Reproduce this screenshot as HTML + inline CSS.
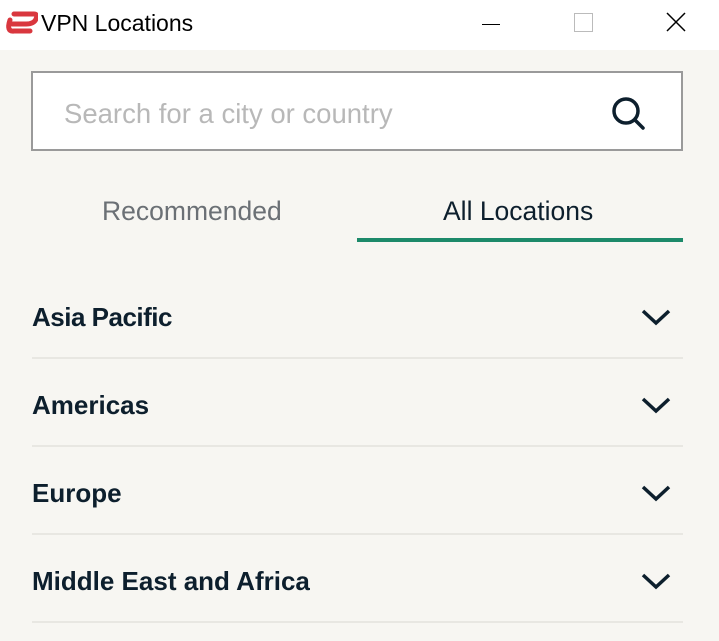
<!DOCTYPE html>
<html><head><style>
body{margin:0;width:719px;height:641px;background:#f7f6f2;font-family:"Liberation Sans",sans-serif;position:relative;overflow:hidden}
.tb{position:absolute;left:0;top:0;width:719px;height:50px;background:#fff}
.title{position:absolute;left:41px;top:10px;font-size:23px;color:#000}
.search{position:absolute;left:31px;top:71px;width:652px;height:80px;border:2px solid #9a9a9a;background:#fff;box-sizing:border-box}
.ph{position:absolute;left:31px;top:25px;font-size:27.5px;color:#b8b8b8}
.tab{position:absolute;top:196px;font-size:26.5px}
.ul{position:absolute;left:357px;top:238px;width:326px;height:4px;background:#1d8a6a}
.row{position:absolute;left:32px;width:651px;height:88px;border-bottom:2px solid #e8e7e2;box-sizing:border-box}
.row span{position:absolute;left:0;top:31px;font-size:26px;font-weight:bold;color:#0d1f2d}
.row svg{position:absolute;right:12px;top:37px}
</style></head><body>
<div class="tb">
<svg style="position:absolute;left:4px;top:11px" width="34" height="24" viewBox="0 0 34 24"><path d="M10 3 H30 Q34 3 32 8 Q30 13 22 13 H8" fill="none" stroke="#d9373e" stroke-width="5" stroke-linecap="round"/><path d="M6 9 Q2 21 10 20 H26" fill="none" stroke="#d9373e" stroke-width="5" stroke-linecap="round"/></svg>
<div class="title">VPN Locations</div>
<div style="position:absolute;left:482px;top:24px;width:18px;height:1px;background:#000"></div>
<div style="position:absolute;left:574px;top:13px;width:17px;height:17px;border:1px solid #bbb"></div>
<svg style="position:absolute;left:666px;top:12px" width="20" height="20"><path d="M1 1L19 19M19 1L1 19" stroke="#000" stroke-width="1.5"/></svg>
</div>
<div class="search"><div class="ph">Search for a city or country</div>
<svg style="position:absolute;left:576px;top:21px" width="40" height="40"><circle cx="17" cy="17" r="12" fill="none" stroke="#0d1f2d" stroke-width="3.5"/><path d="M26 26L34 34" stroke="#0d1f2d" stroke-width="3.5" stroke-linecap="round"/></svg></div>
<div class="tab" style="left:102px;color:#6b7075">Recommended</div>
<div class="tab" style="left:443px;color:#0d1f2d">All Locations</div>
<div class="ul"></div>
<div class="row" style="top:271px"><span style="letter-spacing:-0.5px">Asia Pacific</span><svg width="30" height="18"><path d="M2 3L15 15L28 3" fill="none" stroke="#0d1f2d" stroke-width="3.5"/></svg></div>
<div class="row" style="top:359px"><span>Americas</span><svg width="30" height="18"><path d="M2 3L15 15L28 3" fill="none" stroke="#0d1f2d" stroke-width="3.5"/></svg></div>
<div class="row" style="top:447px"><span>Europe</span><svg width="30" height="18"><path d="M2 3L15 15L28 3" fill="none" stroke="#0d1f2d" stroke-width="3.5"/></svg></div>
<div class="row" style="top:535px"><span>Middle East and Africa</span><svg width="30" height="18"><path d="M2 3L15 15L28 3" fill="none" stroke="#0d1f2d" stroke-width="3.5"/></svg></div>
</body></html>
